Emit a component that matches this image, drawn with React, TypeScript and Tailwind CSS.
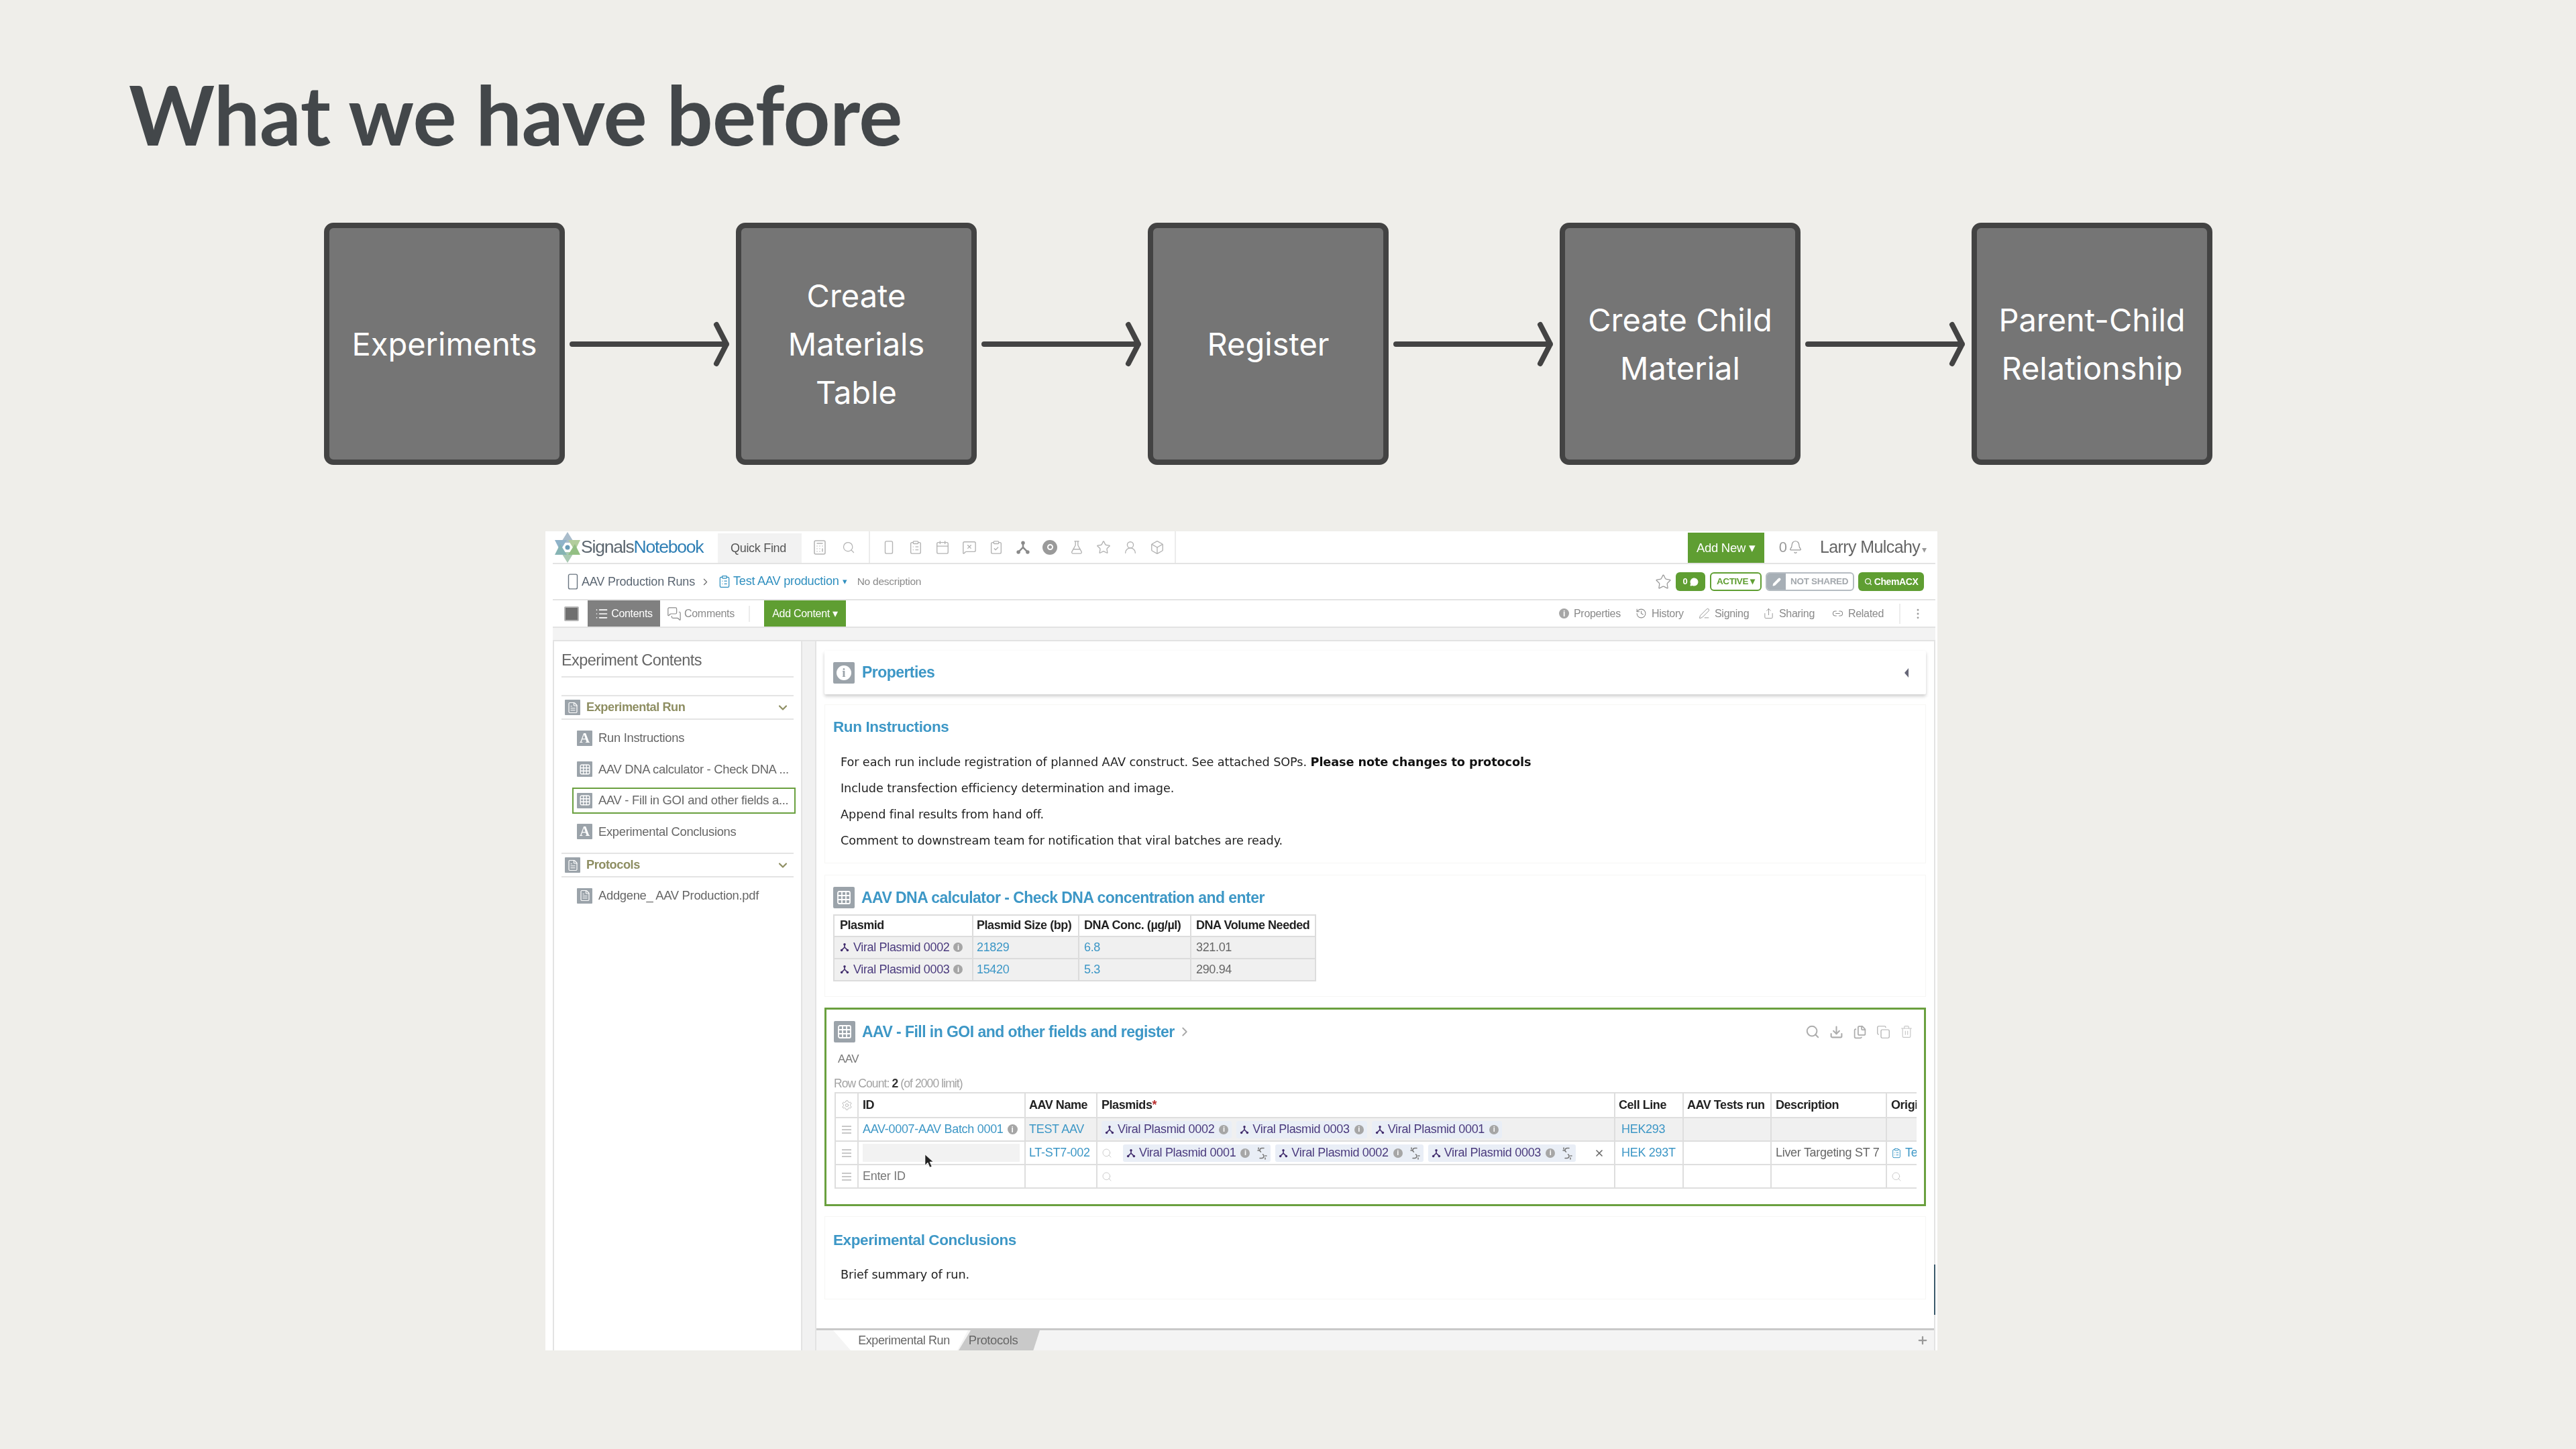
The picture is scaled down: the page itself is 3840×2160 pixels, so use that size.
import React from 'react';
import {
  Bell,
  Box,
  Calculator,
  Calendar,
  ChevronDown,
  ChevronRight,
  ClipboardCheck,
  ClipboardList,
  Copy,
  Download,
  FileText,
  FlaskConical,
  History,
  Files,
  Grid3x3,
  Link2,
  List,
  MessageCircle,
  MessageSquareX,
  MessagesSquare,
  MoreVertical,
  Pencil,
  PenLine,
  Plus,
  RectangleVertical,
  Search,
  Settings,
  Share,
  Star,
  Trash2,
  UserRound,
  X,
} from 'lucide-react';

const STEPS = [
  { lines: ['Experiments'] },
  { lines: ['Create', 'Materials', 'Table'] },
  { lines: ['Register'] },
  { lines: ['Create Child', 'Material'] },
  { lines: ['Parent-Child', 'Relationship'] },
];

const Arrow = () => (
  <svg width="255" height="80" viewBox="0 0 255 80" className="shrink-0">
    <path
      d="M11 40H241M226 11L241 40L226 69"
      fill="none"
      stroke="#434343"
      strokeWidth="8"
      strokeLinecap="round"
      strokeLinejoin="round"
    />
  </svg>
);

const Plasmid = ({ size = 16, color = '#3f2a6b' }: { size?: number; color?: string }) => (
  <svg width={size} height={size} viewBox="0 0 16 16" className="shrink-0">
    <path d="M8 2.5V8L3 13M8 8L13 13" fill="none" stroke={color} strokeWidth="1.8" />
    <circle cx="8" cy="3" r="2" fill={color} />
    <circle cx="3" cy="13" r="2" fill={color} />
    <circle cx="13" cy="13" r="2" fill={color} />
  </svg>
);

const BrokenLink = () => (
  <svg width="16" height="20" viewBox="0 0 16 20" className="ml-[5px] shrink-0">
    <path
      d="M11 2.5H8a3 3 0 0 0-1.5 5.6M5 17.5h3a3 3 0 0 0 1.5-5.6M3 2v2M2 6h2M13 14h2M13 17v2"
      fill="none"
      stroke="#777"
      strokeWidth="1.5"
      strokeLinecap="round"
    />
  </svg>
);

const Logo = () => (
  <svg width="38" height="46" viewBox="0 0 38 46" className="shrink-0">
    <path d="M19 0L29 16H9Z" fill="#a9bccb" />
    <path d="M19 46L9 30H29Z" fill="#a9c9b2" />
    <path d="M0 12L18 12L8 28Z" fill="#8fb3c9" />
    <path d="M38 12L20 12L30 28Z" fill="#b3cd9d" />
    <path d="M0 34L18 34L8 18Z" fill="#86b4b4" />
    <path d="M38 34L20 34L30 18Z" fill="#93bf83" />
    <circle cx="19" cy="23" r="6" fill="#fff" />
    <circle cx="19" cy="23" r="3.5" fill="#6a9cb6" />
  </svg>
);

const InfoDot = ({ size = 14 }: { size?: number }) => (
  <span
    className="inline-flex shrink-0 items-center justify-center rounded-full bg-[#a6a6a6] font-bold leading-none text-white"
    style={{ width: size, height: size, fontSize: size - 3 }}
  >
    i
  </span>
);

const Square = ({ kind, large }: { kind: 'A' | 'grid' | 'file' | 'info'; large?: boolean }) => {
  const box = large
    ? 'h-[32px] w-[32px] rounded-[2px] bg-[#9ba3aa]'
    : 'h-[23px] w-[23px] rounded-[1px] bg-[#9ba3aa]';
  const iconSize = large ? 24 : 18;
  return (
    <div className={`flex shrink-0 items-center justify-center text-white ${box}`}>
      {kind === 'A' && <span className="font-['Liberation_Serif',serif] text-[21px] font-bold leading-none">A</span>}
      {kind === 'grid' && <Grid3x3 size={iconSize} strokeWidth={1.8} />}
      {kind === 'file' && <FileText size={iconSize} strokeWidth={1.6} />}
      {kind === 'info' && (
        <span className="flex h-[22px] w-[22px] items-center justify-center rounded-full bg-white font-['Liberation_Serif',serif] text-[19px] font-bold leading-none text-[#9ba3aa]">
          i
        </span>
      )}
    </div>
  );
};

const TopBar = () => (
  <div className="flex h-[49px] shrink-0 items-center border-b-2 border-[#e3e3e3]">
    <div className="ml-[3px] flex w-[243px] shrink-0 items-center gap-[1px]">
      <Logo />
      <span className="text-[26.5px] tracking-[-1.2px] text-[#5d6770]">
        Signals<span className="text-[#2f7fb5]">Notebook</span>
      </span>
    </div>
    <div className="flex h-[44px] w-[125px] shrink-0 items-center justify-center self-end bg-[#f2f2f2] pr-[4px] text-[18px] tracking-[-0.3px] text-[#555]">
      Quick Find
    </div>
    <div className="flex h-full items-center gap-[21px] border-r-2 border-[#ececec] pl-[15px] pr-[20px] text-[#b3b3b3]">
      <Calculator size={24} strokeWidth={1.5} />
      <Search size={20} strokeWidth={1.5} />
    </div>
    <div className="flex h-full items-center gap-[18px] border-r-2 border-[#ececec] pl-[17px] pr-[15px] text-[#b3b3b3]">
      <RectangleVertical size={22} strokeWidth={1.5} />
      <ClipboardList size={22} strokeWidth={1.5} />
      <Calendar size={22} strokeWidth={1.5} />
      <MessageSquareX size={22} strokeWidth={1.5} />
      <ClipboardCheck size={22} strokeWidth={1.5} />
      <Plasmid size={22} color="#8a8a8a" />
      <div className="flex h-[22px] w-[22px] items-center justify-center rounded-full bg-[#9a9a9a]">
        <div className="h-[9px] w-[9px] rounded-full border-2 border-white" />
      </div>
      <FlaskConical size={22} strokeWidth={1.5} />
      <Star size={22} strokeWidth={1.5} />
      <UserRound size={22} strokeWidth={1.5} />
      <Box size={22} strokeWidth={1.5} />
    </div>
    <div className="flex-1" />
    <div className="flex h-[45px] w-[114px] shrink-0 items-center justify-center self-end bg-[#5f9e32] text-[18.5px] tracking-[-0.3px] text-white">
      Add New ▾
    </div>
    <div className="ml-[22px] flex items-center text-[22px] text-[#999]">
      0<Bell size={21} strokeWidth={1.4} className="ml-[2px]" />
    </div>
    <div className="ml-[26px] w-[172px] text-[25px] tracking-[-0.6px] text-[#666]">
      Larry Mulcahy <span className="-ml-[4px] text-[14px] text-[#999]">▾</span>
    </div>
  </div>
);

const BreadcrumbBar = () => (
  <div className="flex h-[54px] shrink-0 items-center border-b-2 border-[#e3e3e3] pl-[18px]">
    <RectangleVertical size={26} strokeWidth={1.3} className="-ml-[1px] text-[#6a7580]" />
    <span className="text-[18px] tracking-[-0.2px] text-[#5b6672]">AAV Production Runs</span>
    <ChevronRight size={17} strokeWidth={1.5} className="ml-[7px] text-[#666]" />
    <ClipboardList size={20} strokeWidth={1.5} className="ml-[10px] text-[#2f8fbf]" />
    <span className="ml-[3px] text-[18.2px] tracking-[-0.25px] text-[#2f8fbf]">Test AAV production</span>
    <span className="ml-[5px] text-[13px] text-[#2f8fbf]">▾</span>
    <span className="ml-[15px] text-[15.5px] tracking-[-0.25px] text-[#8a8a8a]">No description</span>
    <div className="flex-1" />
    <Star size={25} strokeWidth={1.2} className="text-[#9a9a9a]" />
    <div className="ml-[6px] flex h-[28px] w-[44px] items-center justify-center gap-[3px] rounded-[6px] bg-[#5f9e32] text-[13px] font-bold text-white">
      0<MessageCircle size={13} fill="white" />
    </div>
    <div className="ml-[7px] flex h-[28px] w-[77px] items-center justify-center rounded-[6px] border-2 border-[#5f9e32] text-[13.5px] font-bold tracking-[-0.4px] text-[#5f9e32]">
      ACTIVE ▾
    </div>
    <div className="ml-[6px] flex h-[28px] w-[132px] items-center overflow-hidden rounded-[6px] border-2 border-[#b5bcc2] text-[13.5px] font-bold tracking-[-0.3px] text-[#a3a8ad]">
      <div className="flex h-full w-[28px] items-center justify-center bg-[#a7afb6]">
        <Pencil size={13} fill="white" className="text-white" />
      </div>
      <span className="ml-[7px]">NOT SHARED</span>
    </div>
    <div className="ml-[6px] flex h-[28px] w-[98px] items-center justify-center gap-[3px] rounded-[6px] bg-[#5f9e32] text-[14px] font-bold tracking-[-0.4px] text-white">
      <Search size={12} strokeWidth={2.5} />
      ChemACX
    </div>
    <div className="w-[17px]" />
  </div>
);

const ToolAction = ({ icon, label, width }: { icon: React.ReactNode; label: string; width: string }) => (
  <div className={`flex items-center gap-[7px] text-[16px] tracking-[-0.3px] text-[#8a8a8a] ${width}`}>
    {icon}
    {label}
  </div>
);

const ToolBar = () => (
  <div className="flex h-[41px] shrink-0 items-center border-b-2 border-[#e3e3e3] pl-[17px]">
    <div className="h-[22px] w-[22px] rounded-[2px] border-2 border-[#b5b5b5] bg-[#6f6f6f]" />
    <div className="ml-[13px] flex h-full w-[108px] items-center justify-center gap-[4px] bg-[#808080] text-[16px] tracking-[-0.3px] text-white">
      <List size={20} strokeWidth={2} />
      Contents
    </div>
    <div className="ml-[10px] flex w-[124px] items-center gap-[4px] border-r-2 border-[#ececec] text-[16px] tracking-[-0.3px] text-[#8a8a8a]">
      <MessagesSquare size={22} strokeWidth={1.3} />
      Comments
    </div>
    <div className="ml-[21px] flex h-full w-[122px] items-center justify-center bg-[#5f9e32] text-[16px] tracking-[-0.3px] text-white">
      Add Content ▾
    </div>
    <div className="flex-1" />
    <ToolAction icon={<InfoDot size={15} />} label="Properties" width="w-[114px]" />
    <ToolAction icon={<History size={17} strokeWidth={1.5} />} label="History" width="w-[94px]" />
    <ToolAction icon={<PenLine size={17} strokeWidth={1.2} />} label="Signing" width="w-[96px]" />
    <ToolAction icon={<Share size={17} strokeWidth={1.2} />} label="Sharing" width="w-[103px]" />
    <ToolAction icon={<Link2 size={17} strokeWidth={1.5} />} label="Related" width="w-[100px]" />
    <div className="flex h-[30px] w-[54px] items-center justify-center border-l-2 border-[#ececec] text-[#9a9a9a]">
      <MoreVertical size={20} strokeWidth={1.5} />
    </div>
  </div>
);

const SideGroup = ({ label }: { label: string }) => (
  <div className="flex h-[37px] items-center border-y-2 border-[#e4e4e4] pl-[5px] pr-[6px]">
    <Square kind="file" />
    <span className="ml-[9px] flex-1 text-[18.2px] font-bold tracking-[-0.45px] text-[#8e8e62]">{label}</span>
    <ChevronDown size={20} strokeWidth={2.6} className="text-[#8e8e62]" />
  </div>
);

const SideItem = ({ kind, label, active }: { kind: 'A' | 'grid' | 'file'; label: string; active?: boolean }) => (
  <div
    className={`ml-[16px] mt-[7.5px] flex h-[39px] w-[333px] items-center gap-[9px] border-2 pl-[5px] text-[18.4px] tracking-[-0.3px] text-[#666] ${
      active ? 'border-[#6aa03f]' : 'border-transparent'
    }`}
  >
    <Square kind={kind} />
    {label}
  </div>
);

const Sidebar = () => (
  <aside className="flex w-[372px] shrink-0 flex-col border-x-2 border-[#e3e3e3] bg-white px-[11px]">
    <div className="flex h-[54px] items-center border-b-2 border-[#e4e4e4] pt-[6px] text-[23.5px] tracking-[-0.55px] text-[#666]">
      Experiment Contents
    </div>
    <div className="mt-[26px]">
      <SideGroup label="Experimental Run" />
    </div>
    <SideItem kind="A" label="Run Instructions" />
    <SideItem kind="grid" label="AAV DNA calculator - Check DNA ..." />
    <SideItem kind="grid" label="AAV - Fill in GOI and other fields a..." active />
    <SideItem kind="A" label="Experimental Conclusions" />
    <div className="mt-[12px]">
      <SideGroup label="Protocols" />
    </div>
    <SideItem kind="file" label="Addgene_ AAV Production.pdf" />
  </aside>
);

const Heading = ({ children }: { children: React.ReactNode }) => (
  <span className="text-[23px] font-bold tracking-[-0.55px] text-[#3d97c6]">{children}</span>
);

const Para = ({ children }: { children: React.ReactNode }) => (
  <p className="flex h-[39px] items-center whitespace-pre pl-[23px] font-['DejaVu_Sans',sans-serif] text-[17.7px] tracking-[-0.1px] text-[#222]">
    {children}
  </p>
);

const CalcRow = ({ name, size, conc, vol, shaded }: { name: string; size: string; conc: string; vol: string; shaded?: boolean }) => (
  <div className={`flex h-[33px] border-t-2 border-[#dcdcdc] text-[18px] tracking-[-0.35px] ${shaded ? 'bg-[#f0f0f0]' : ''}`}>
    <div className="flex w-[205px] items-center gap-[6px] pl-[8px] text-[#4a3a7d]">
      <Plasmid size={14} />
      {name}
      <InfoDot size={14} />
    </div>
    <div className="flex w-[158px] items-center border-l-2 border-[#dcdcdc] pl-[5px] text-[#3d97c6]">{size}</div>
    <div className="flex w-[167px] items-center border-l-2 border-[#dcdcdc] pl-[7px] text-[#3d97c6]">{conc}</div>
    <div className="flex flex-1 items-center border-l-2 border-[#dcdcdc] pl-[7px] text-[#666]">{vol}</div>
  </div>
);

const CalcTable = () => (
  <div className="ml-[12px] mt-[7px] w-[720px] border-2 border-[#dcdcdc] text-[18px]">
    <div className="flex h-[30px] font-bold tracking-[-0.45px] text-[#222]">
      <div className="flex w-[205px] items-center pl-[8px]">Plasmid</div>
      <div className="flex w-[158px] items-center border-l-2 border-[#dcdcdc] pl-[5px]">Plasmid Size (bp)</div>
      <div className="flex w-[167px] items-center border-l-2 border-[#dcdcdc] pl-[7px]">DNA Conc. (µg/µl)</div>
      <div className="flex flex-1 items-center border-l-2 border-[#dcdcdc] pl-[7px]">DNA Volume Needed</div>
    </div>
    <CalcRow shaded name="Viral Plasmid 0002" size="21829" conc="6.8" vol="321.01" />
    <CalcRow shaded name="Viral Plasmid 0003" size="15420" conc="5.3" vol="290.94" />
  </div>
);

const Chip = ({ label, broken }: { label: string; broken?: boolean }) => (
  <div className="flex h-[26px] shrink-0 items-center gap-[5px] rounded-[3px] bg-[#e9eef6] px-[5px] text-[#4a3a7d]">
    <Plasmid size={14} />
    <span className="mr-[2px]">{label}</span>
    <InfoDot size={14} />
    {broken && <BrokenLink />}
  </div>
);

const COLS = {
  handle: 'flex w-[32px] shrink-0 items-center justify-center',
  id: 'flex w-[249px] shrink-0 items-center border-l-2 border-[#dedede] pl-[6px]',
  name: 'flex w-[107px] shrink-0 items-center border-l-2 border-[#dedede] pl-[5px]',
  plasmids: 'flex w-[772px] shrink-0 items-center border-l-2 border-[#dedede] pl-[6px]',
  cell: 'flex w-[102px] shrink-0 items-center border-l-2 border-[#dedede] pl-[5px]',
  tests: 'flex w-[131px] shrink-0 items-center border-l-2 border-[#dedede] pl-[5px]',
  desc: 'flex w-[172px] shrink-0 items-center border-l-2 border-[#dedede] pl-[6px]',
  orig: 'flex flex-1 items-center overflow-hidden border-l-2 border-[#dedede] pl-[6px]',
};

const Handle = () => (
  <div className={COLS.handle}>
    <div className="flex flex-col gap-[3px]">
      <div className="h-[2px] w-[14px] bg-[#c8c8c8]" />
      <div className="h-[2px] w-[14px] bg-[#c8c8c8]" />
      <div className="h-[2px] w-[14px] bg-[#c8c8c8]" />
    </div>
  </div>
);

const AavTable = () => (
  <div className="ml-[12px] mt-[2px] w-[1613px] border-y-2 border-l-2 border-[#dedede] text-[18px] tracking-[-0.3px]">
    <div className="flex h-[35px] font-bold tracking-[-0.45px] text-[#222]">
      <div className={COLS.handle}>
        <Settings size={17} strokeWidth={1.3} className="text-[#b0b0b0]" />
      </div>
      <div className={COLS.id}>ID</div>
      <div className={COLS.name}>AAV Name</div>
      <div className={COLS.plasmids}>
        Plasmids<span className="text-[#b33]">*</span>
      </div>
      <div className={COLS.cell}>Cell Line</div>
      <div className={COLS.tests}>AAV Tests run</div>
      <div className={COLS.desc}>Description</div>
      <div className={COLS.orig}>Origi</div>
    </div>
    <div className="flex h-[35px] border-t-2 border-[#dedede] text-[#3d97c6]">
      <Handle />
      <div className={`${COLS.id} gap-[6px]`}>
        AAV-0007-AAV Batch 0001
        <InfoDot size={15} />
      </div>
      <div className={`${COLS.name} bg-[#f0f0f0]`}>TEST AAV</div>
      <div className={`${COLS.plasmids} gap-[7px] bg-[#f0f0f0] pl-[4px]`}>
        <Chip label="Viral Plasmid 0002" />
        <Chip label="Viral Plasmid 0003" />
        <Chip label="Viral Plasmid 0001" />
      </div>
      <div className={`${COLS.cell} bg-[#f0f0f0] pl-[9px]`}>HEK293</div>
      <div className={`${COLS.tests} bg-[#f0f0f0]`} />
      <div className={`${COLS.desc} bg-[#f0f0f0]`} />
      <div className={`${COLS.orig} bg-[#f0f0f0]`} />
    </div>
    <div className="flex h-[35px] border-t-2 border-[#dedede] text-[#3d97c6]">
      <Handle />
      <div className={`${COLS.id} relative pr-[7px]`}>
        <div className="h-[27px] w-full bg-[#f2f2f2]" />
        <svg width="14" height="22" viewBox="0 0 14 22" className="absolute left-[98px] top-[18px]">
          <path d="M1 1V17L5 13L8 20L11 19L8 12H13Z" fill="#222" stroke="#fff" strokeWidth="0.6" />
        </svg>
      </div>
      <div className={COLS.name}>LT-ST7-002</div>
      <div className={`${COLS.plasmids} gap-[7px]`}>
        <Search size={16} strokeWidth={1.4} className="mr-[9px] text-[#c8c8c8]" />
        <Chip broken label="Viral Plasmid 0001" />
        <Chip broken label="Viral Plasmid 0002" />
        <Chip broken label="Viral Plasmid 0003" />
        <X size={16} strokeWidth={2.4} className="ml-[20px] text-[#666]" />
      </div>
      <div className={`${COLS.cell} pl-[9px]`}>HEK 293T</div>
      <div className={COLS.tests} />
      <div className={`${COLS.desc} text-[#666]`}>Liver Targeting ST 7</div>
      <div className={`${COLS.orig} gap-[5px]`}>
        <ClipboardList size={16} strokeWidth={1.5} className="shrink-0" />
        Te
      </div>
    </div>
    <div className="flex h-[35px] border-t-2 border-[#dedede] text-[#777]">
      <Handle />
      <div className={COLS.id}>Enter ID</div>
      <div className={COLS.name} />
      <div className={COLS.plasmids}>
        <Search size={16} strokeWidth={1.4} className="text-[#c8c8c8]" />
      </div>
      <div className={COLS.cell} />
      <div className={COLS.tests} />
      <div className={COLS.desc} />
      <div className={COLS.orig}>
        <Search size={16} strokeWidth={1.4} className="text-[#c8c8c8]" />
      </div>
    </div>
  </div>
);

const MainPanel = () => (
  <main className="relative flex min-w-0 flex-1 flex-col border-l-2 border-r-2 border-[#e3e3e3] bg-white">
    <div className="absolute right-[-2px] top-[929px] h-[75px] w-[2px] bg-[#3b5a6b]" />
    <div className="flex-1 overflow-hidden pl-[12px] pr-[12px]">
      <section className="mt-[14px] flex h-[65px] items-center rounded-[2px] bg-white pl-[13px] pr-[26px] shadow-[0_3px_5px_rgba(0,0,0,0.2)]">
        <Square kind="info" large />
        <span className="ml-[11px] flex-1">
          <Heading>Properties</Heading>
        </span>
        <div className="h-0 w-0 border-y-[7px] border-r-[6px] border-y-transparent border-r-[#667]" />
      </section>

      <section className="mt-[15px] h-[237px] border border-[#f6f6f4]">
        <div className="flex h-[66px] items-center pl-[12px] text-[22.5px] font-bold tracking-[-0.4px] text-[#3d97c6]">
          Run Instructions
        </div>
        <div>
          <Para>
            For each run include registration of planned AAV construct. See attached SOPs.{' '}
            <b className="font-bold text-[#111]">Please note changes to protocols</b>
          </Para>
          <Para>Include transfection efficiency determination and image.</Para>
          <Para>Append final results from hand off.</Para>
          <Para>Comment to downstream team for notification that viral batches are ready.</Para>
        </div>
      </section>

      <section className="mt-[17px] h-[182px] border border-[#f6f6f4]">
        <div className="mt-[16px] flex items-center gap-[10px] pl-[12px]">
          <Square kind="grid" large />
          <Heading>AAV DNA calculator - Check DNA concentration and enter</Heading>
        </div>
        <CalcTable />
      </section>

      <section className="mt-[16px] h-[296px] border-[3px] border-[#6aa03f]">
        <div className="mt-[16px] flex items-center pl-[11px] pr-[16px]">
          <Square kind="grid" large />
          <span className="ml-[10px]">
            <Heading>AAV - Fill in GOI and other fields and register</Heading>
          </span>
          <ChevronRight size={22} strokeWidth={2} className="ml-[4px] text-[#a8a8a8]" />
          <div className="flex-1" />
          <div className="flex items-center gap-[14px] text-[#adadad]">
            <Search size={22} strokeWidth={2.2} />
            <Download size={21} strokeWidth={2.4} />
            <Files size={21} strokeWidth={2} />
            <Copy size={21} strokeWidth={1.4} />
            <Trash2 size={20} strokeWidth={1.4} className="text-[#c8c8c8]" />
          </div>
        </div>
        <div className="mt-[10px] pl-[17px] text-[17px] tracking-[-0.6px] text-[#777]">AAV</div>
        <div className="mt-[13px] pl-[11px] text-[17.5px] leading-[22px] tracking-[-0.9px] text-[#a3a3a3]">
          Row Count: <b className="font-bold text-[#333]">2</b> (of 2000 limit)
        </div>
        <AavTable />
      </section>

      <section className="mt-[15px] h-[124px] border border-[#f6f6f4]">
        <div className="mt-[18px] pl-[12px] text-[22.5px] font-bold tracking-[-0.4px] text-[#3d97c6]">
          Experimental Conclusions
        </div>
        <div className="mt-[15px]">
          <Para>Brief summary of run.</Para>
        </div>
      </section>
    </div>

    <div className="flex h-[33px] shrink-0 items-stretch border-t-[3px] border-[#c9c9c9] bg-[#f4f4f4] pl-[25px] pr-[8px] tracking-[-0.4px]">
      <div className="flex w-[201px] items-center justify-center bg-white pl-[10px] text-[18px] text-[#666] [clip-path:polygon(0_0,100%_0,92%_100%,13%_100%)]">
        Experimental Run
      </div>
      <div className="-ml-[14px] flex w-[121px] items-center justify-center bg-[#c9c9c9] pr-[18px] text-[18.5px] text-[#666] [clip-path:polygon(15%_0,100%_0,92%_100%,0_100%)]">
        Protocols
      </div>
      <div className="flex-1" />
      <Plus size={18} strokeWidth={3} className="self-center text-[#999]" />
    </div>
  </main>
);

const Screenshot = () => (
  <div className="ml-[813px] mt-[99px] flex h-[1221px] w-[2075px] flex-col bg-white pl-[11px] pr-[3px] font-['Liberation_Sans',sans-serif] blur-[0.7px]">
    <TopBar />
    <BreadcrumbBar />
    <ToolBar />
    <div className="h-[20px] shrink-0 border-b-2 border-[#e3e3e3] bg-[#f3f3f3]" />
    <div className="flex min-h-0 flex-1 gap-[19px] bg-[#f1f1f1]">
      <Sidebar />
      <MainPanel />
    </div>
  </div>
);

export default function App() {
  return (
    <div className="h-[2160px] w-[3840px] overflow-hidden bg-[#efeeea]">
      <h1 className="pl-[192px] pt-[95px] font-['Lato',sans-serif] text-[122px] font-bold leading-[150px] tracking-[-0.5px] text-[#43474a]">
        What we have before
      </h1>
      <div className="ml-[483px] mt-[87px] flex items-center font-['Inter',sans-serif]">
        {STEPS.map((step, i) => (
          <React.Fragment key={step.lines[0]}>
            <div className="flex h-[361px] w-[359px] shrink-0 flex-col items-center justify-center rounded-[14px] border-[8px] border-[#434343] bg-[#757575] text-center text-[47px] leading-[72px] text-white">
              {step.lines.map((line) => (
                <div key={line}>{line}</div>
              ))}
            </div>
            {i < STEPS.length - 1 && <Arrow />}
          </React.Fragment>
        ))}
      </div>
      <Screenshot />
    </div>
  );
}
